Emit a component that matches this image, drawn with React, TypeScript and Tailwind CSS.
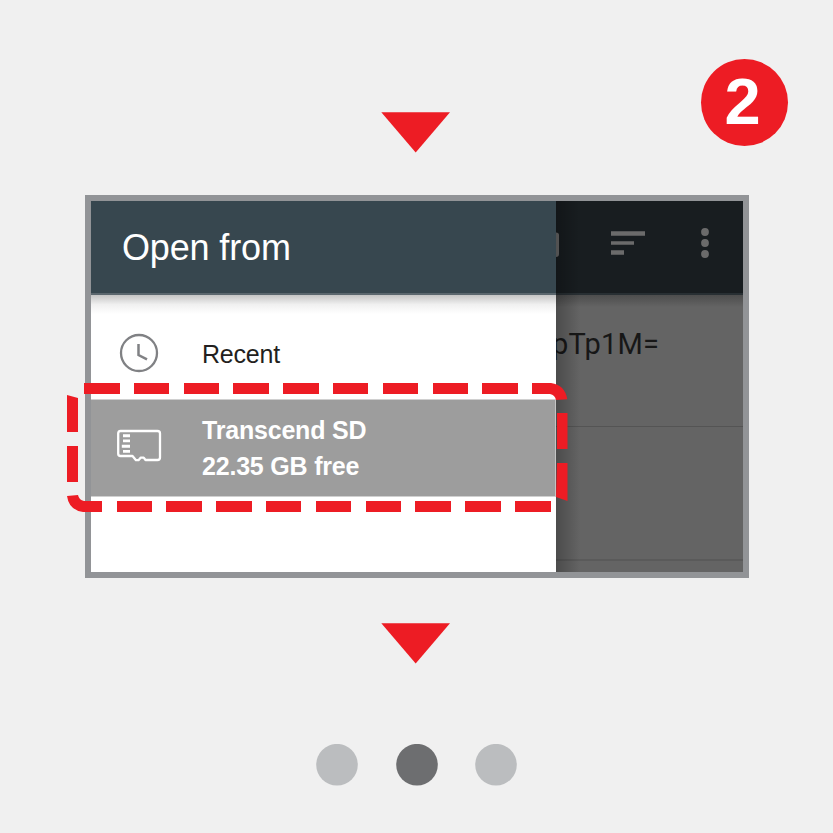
const topDashes = [84, 134, 184, 233, 283, 333, 383, 433, 482];
const bottomDashes = [117, 166, 216, 266, 316, 366, 415, 465, 515];

function Triangle() {
  return (
    <svg className="block h-[41px] w-[69px]" viewBox="0 0 69 41" fill="#ed1c24">
      <path d="M0.3 0.2H69L34.7 40.6Z" />
    </svg>
  );
}

function ClockIcon() {
  return (
    <svg className="block h-10 w-10" viewBox="0 0 40 40" fill="none" stroke="#808184">
      <circle cx="20" cy="20" r="18" strokeWidth="2.3" />
      <path d="M19.5 11V22L28 26.4" strokeWidth="2.5" />
    </svg>
  );
}

function CardIcon() {
  return (
    <svg className="block h-9 w-[46px]" viewBox="0 0 46 36" fill="none" stroke="#fff">
      <path
        d="M4.5 3H41.5Q44 3 44 5.5V29.5Q44 32 41.5 32H29.5L27.7 29.6H24.8L22.5 32.2H20L16.5 28H4.5Q2.2 28 2.2 25.8V5.5Q2.2 3 4.5 3Z"
        strokeWidth="2.3"
        strokeLinejoin="round"
      />
      <path d="M7 7.7H14M7 12.9H14M5.8 18.2H14M7 23.4H14" strokeWidth="2.9" />
    </svg>
  );
}

function PagerDot({ color }: { color: string }) {
  return (
    <svg className="block h-[42px] w-[42px]" viewBox="0 0 42 42" fill={color}>
      <circle cx="21" cy="20.7" r="20.8" />
    </svg>
  );
}

function DashedOutline() {
  return (
    <svg className="pointer-events-none absolute left-0 top-0 h-[833px] w-[833px]" viewBox="0 0 833 833" fill="#ed1c24">
      {topDashes.map((x) => (
        <rect key={x} x={x} y="383" width={x === 134 || x === 184 || x === 333 || x === 383 || x === 433 ? 35 : 36} height="11" />
      ))}
      {bottomDashes.map((x) => (
        <rect key={x} x={x} y="501" width={x === 166 || x === 216 || x === 415 || x === 465 || x === 515 ? 36 : 35} height="11" />
      ))}
      <path d="M532 383H551Q565 385 567.3 399.3L556 400Q555 395 550 394H532Z" />
      <path d="M557 413H567.5V449H557ZM557 463H567.5V501L556 497Z" />
      <path d="M67 395L78 398V432H67ZM67 446H78V482H67Z" />
      <path d="M67 496L78 495Q79 500 84 501H102V512H83Q69 510 67 496Z" />
    </svg>
  );
}

function Drawer() {
  return (
    <div className="flex w-[465px] shrink-0 flex-col bg-white">
      <div className="h-[94px] shrink-0 border-b-2 border-[#5b676e] bg-[#37474f] pl-[31px] text-[36px] leading-[94px] tracking-[-0.15px] text-white">
        Open from
      </div>
      <div className="h-[19px] shrink-0 bg-linear-to-b from-[#c5c5c5] via-[#f0f0f0] to-white" />
      <div className="flex h-[85px] shrink-0 items-start pl-[28px] pt-[19px]">
        <ClockIcon />
        <span className="ml-[43px] text-[25px] leading-[42px] tracking-[-0.2px] text-[#231f20]">Recent</span>
      </div>
      <div className="flex h-[98px] shrink-0 items-start border-y border-r border-y-[#d0d0d0] border-r-[#c4c4c4] bg-[#9d9d9d] pl-[25px]">
        <div className="pt-[28px]">
          <CardIcon />
        </div>
        <div className="ml-[40px] pt-[12px] text-[25px] font-bold leading-[36px] tracking-[-0.2px] text-white">
          <div>Transcend SD</div>
          <div>22.35 GB free</div>
        </div>
      </div>
    </div>
  );
}

function DimmedPage() {
  return (
    <div className="relative flex min-w-0 flex-1 flex-col overflow-hidden bg-[#646464]">
      <div className="h-[94px] shrink-0 border-b-2 border-[#282f33] bg-[#181d20]">
        <svg className="block h-[92px] w-[187px]" viewBox="0 0 187 92" fill="#6b6b6b">
          <path d="M0 31.5Q3 31.5 3 34V53Q3 56 0 56Z" />
          <path d="M55 30.3H89V34.8H55ZM55 40.3H78V43.8H55ZM55 49.3H68V53.8H55Z" />
          <circle cx="149" cy="31" r="3.9" />
          <circle cx="149" cy="42" r="3.9" />
          <circle cx="149" cy="53" r="3.9" />
        </svg>
      </div>
      <div className="h-[12px] shrink-0 bg-linear-to-b from-[#4d4d4d] to-[#646464]" />
      <div className="-ml-[4px] h-[120px] shrink-0 border-b border-[#545454] pt-[19px] font-[Roboto,sans-serif] text-[29px] leading-[36px] tracking-[0.2px] text-[#171717]">
        pTp1M=
      </div>
      <div className="h-[134px] shrink-0 border-b-2 border-[#5a5a5a]" />
      <div className="absolute inset-y-0 left-0 w-[24px] bg-linear-to-r from-black/25 to-transparent" />
    </div>
  );
}

export default function App() {
  return (
    <div className="relative flex h-[833px] w-[833px] flex-col overflow-hidden bg-[#f0f0f0] font-['Liberation_Sans',Arial,sans-serif]">
      <div className="flex h-[195px] shrink-0 items-start">
        <div className="ml-[381px] mt-[112px]">
          <Triangle />
        </div>
        <div className="ml-[251px] mt-[59px] h-[87px] w-[87px] rounded-full bg-[#ed1c24] pr-[4px] text-center text-[65px] font-bold leading-[86px] text-white">
          2
        </div>
      </div>
      <div className="ml-[85px] flex h-[383px] w-[663.5px] shrink-0 overflow-hidden border-6 border-[#929497]">
        <Drawer />
        <DimmedPage />
      </div>
      <div className="ml-[381px] mt-[45px]">
        <Triangle />
      </div>
      <div className="ml-[316px] mt-[80px] flex gap-[37.5px]">
        <PagerDot color="#bbbdbf" />
        <PagerDot color="#6d6e70" />
        <PagerDot color="#bbbdbf" />
      </div>
      <DashedOutline />
    </div>
  );
}
